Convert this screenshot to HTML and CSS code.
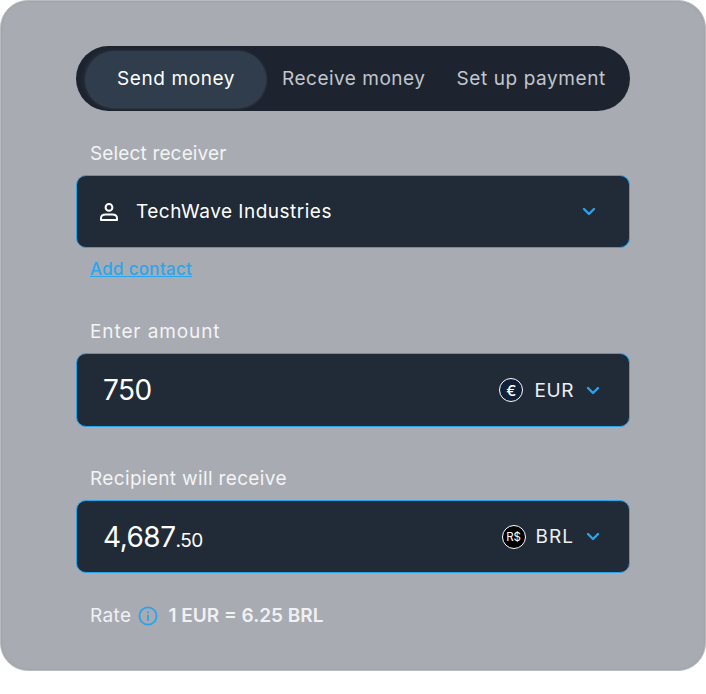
FILE: index.html
```html
<!DOCTYPE html>
<html lang="en">
<head>
    <meta charset="UTF-8">
    <meta name="viewport" content="width=device-width, initial-scale=1.0">
    <title>Send money</title>
    <link rel="stylesheet" href="styles.css">
</head>
<body>
    <div class="card">
        <div class="tabs">
            <div class="tab tab-active">Send money</div>
            <div class="tab tab-receive">Receive money</div>
            <div class="tab tab-setup">Set up payment</div>
        </div>

        <div class="field-label label-receiver">Select receiver</div>
        <div class="box box-receiver">
            <svg class="person-icon" width="20" height="20" viewBox="0 0 20 20" fill="none" stroke="#fff" stroke-width="2">
                <circle cx="10" cy="5.4" r="3.4"/>
                <path d="M2 18v-1.6c0-2.6 2.2-3.8 4.6-3.8h6.8c2.4 0 4.6 1.2 4.6 3.8V18z" stroke-linejoin="round"/>
            </svg>
            <span class="receiver-name">TechWave Industries</span>
            <svg class="chevron chevron-receiver" width="14" height="9" viewBox="0 0 14 9" fill="none" stroke="#2aa3e8" stroke-width="2.4" stroke-linecap="round" stroke-linejoin="round">
                <path d="M2 2l5 5 5-5"/>
            </svg>
        </div>
        <a class="add-contact" href="#">Add contact</a>

        <div class="field-label label-amount">Enter amount</div>
        <div class="box box-amount">
            <span class="amount">750</span>
            <span class="coin"><span class="coin-symbol">€</span></span>
            <span class="currency">EUR</span>
            <svg class="chevron" width="14" height="9" viewBox="0 0 14 9" fill="none" stroke="#2aa3e8" stroke-width="2.4" stroke-linecap="round" stroke-linejoin="round">
                <path d="M2 2l5 5 5-5"/>
            </svg>
        </div>

        <div class="field-label label-recipient">Recipient will receive</div>
        <div class="box box-recipient">
            <span class="amount">4,687<small class="cents">.50</small></span>
            <span class="coin coin-black"><span class="coin-symbol coin-symbol-small">R$</span></span>
            <span class="currency currency-brl">BRL</span>
            <svg class="chevron" width="14" height="9" viewBox="0 0 14 9" fill="none" stroke="#2aa3e8" stroke-width="2.4" stroke-linecap="round" stroke-linejoin="round">
                <path d="M2 2l5 5 5-5"/>
            </svg>
        </div>

        <div class="rate">
            <span class="rate-label">Rate</span>
            <svg class="info-icon" width="20" height="20" viewBox="0 0 20 20" fill="none" stroke="#2aa3e8" stroke-width="1.8" stroke-linecap="round">
                <circle cx="10" cy="10" r="8.6"/>
                <path d="M10 9.4v4.6"/>
                <path d="M10 6.1v.2"/>
            </svg>
            <span class="rate-value">1 EUR = 6.25 BRL</span>
        </div>
    </div>
</body>
</html>
```

FILE: styles.css
```css
body {
    margin: 0;
    background-color: #ffffff;
    font-family: "Inter", "Noto Sans", sans-serif;
}

.card {
    box-sizing: border-box;
    width: 706px;
    height: 671px;
    padding: 45px 75px 0;
    background-color: #a8abb2;
    border: 1px solid #b9bbc0;
    border-radius: 28px;
    box-shadow: inset 0 0 2px rgba(120, 124, 132, 0.4);
}

.tabs {
    display: flex;
    align-items: center;
    height: 65px;
    padding: 0 10px;
    background-color: #1d2430;
    border-radius: 33px;
    color: #c3c6cc;
    font-size: 19px;
}

.tab {
    white-space: nowrap;
}

.tab-active {
    width: 180px;
    height: 56px;
    margin-top: 1px;
    line-height: 56px;
    text-align: center;
    letter-spacing: 0.6px;
    color: #ffffff;
    background-color: #2f3d4d;
    border-radius: 28px;
    box-shadow: 0 1px 3px rgba(120, 125, 130, 0.4), -2px 0 5px rgba(60, 72, 88, 0.4);
}

.tab-receive {
    margin-left: 16px;
    letter-spacing: 0.5px;
}

.tab-setup {
    margin-left: 31px;
    letter-spacing: 0.6px;
}

.field-label {
    margin-left: 14px;
    color: #f3f4f5;
    font-size: 19px;
    line-height: 22px;
}

.label-receiver {
    margin-top: 32px;
    letter-spacing: 0.15px;
}

.label-amount {
    margin-top: 42px;
    letter-spacing: 0.9px;
}

.label-recipient {
    margin-top: 41px;
    letter-spacing: 0.35px;
}

.box {
    display: flex;
    align-items: center;
    box-sizing: border-box;
    margin-top: 10px;
    background-color: #212b38;
    border: 1.5px solid #2aa3e8;
    border-radius: 10px;
    color: #ffffff;
}

.box-receiver {
    height: 73px;
    padding: 0 33px 0 22px;
}

.box-amount {
    height: 74px;
    padding: 0 29px 0 26px;
}

.box-recipient {
    height: 73px;
    padding: 0 29px 0 26px;
}

.person-icon {
    margin-right: 17px;
}

.receiver-name {
    flex: 1;
    font-size: 19px;
    letter-spacing: 0.5px;
}

.add-contact {
    display: inline-block;
    margin: 11px 0 0 14px;
    color: #29a6ee;
    font-size: 17px;
    font-weight: 500;
    line-height: 20px;
    letter-spacing: 0.3px;
}

.amount {
    flex: 1;
    font-size: 28px;
    font-weight: 400;
    letter-spacing: -0.5px;
}

.cents {
    font-size: 19px;
    font-weight: 400;
}

.coin {
    display: flex;
    align-items: center;
    justify-content: center;
    box-sizing: border-box;
    width: 24px;
    height: 24px;
    background-color: #0f2038;
    border: 1.5px solid #ffffff;
    border-radius: 50%;
}

.coin-black {
    background-color: #000000;
}

.coin-symbol {
    font-size: 15px;
    font-weight: 500;
}

.coin-symbol-small {
    font-size: 11.5px;
    font-weight: 400;
}

.currency {
    margin: 0 12px 0 11px;
    color: #eef0f2;
    font-size: 19px;
    letter-spacing: 0.6px;
}

.currency-brl {
    margin-left: 10px;
    letter-spacing: 1px;
}

.rate {
    display: flex;
    align-items: center;
    margin: 31px 0 0 14px;
    color: #f0f1f3;
    font-size: 19px;
}

.rate-label {
    letter-spacing: 0.4px;
}

.info-icon {
    margin: 0 11px 0 6px;
}

.rate-value {
    font-weight: 600;
}
```
